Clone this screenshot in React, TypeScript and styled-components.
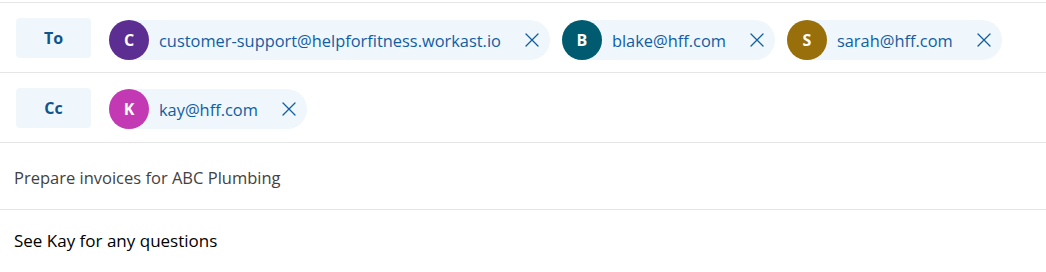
import React from "react";
import styled, { createGlobalStyle } from "styled-components";

const GlobalStyle = createGlobalStyle`
  html, body {
    margin: 0;
    padding: 0;
    background: #ffffff;
  }
  body {
    font-family: "Open Sans", "Noto Sans", "Liberation Sans", sans-serif;
    -webkit-font-smoothing: antialiased;
  }
`;

const Composer = styled.div`
  width: 1046px;
  padding-top: 2px;
`;

const RecipientRow = styled.div`
  display: flex;
  align-items: flex-start;
  gap: 18px;
  height: 69px;
  padding: 0 16px;
  border-top: 1px solid #e6e6e6;
  box-sizing: content-box;
`;

const FieldLabel = styled.button`
  flex: none;
  width: 75px;
  height: 40px;
  margin-top: 15px;
  border: none;
  border-radius: 4px;
  background: #eff6fc;
  color: #0f548c;
  font-family: inherit;
  font-size: 16px;
  font-weight: 700;
  cursor: pointer;
  padding: 0;
`;

const ChipList = styled.div<{ $offset: number }>`
  display: flex;
  flex-wrap: wrap;
  gap: 12px;
  margin-top: ${(p) => p.$offset}px;
`;

const Chip = styled.div`
  display: flex;
  align-items: center;
  height: 40px;
  padding-right: 8px;
  border-radius: 20px;
  background: #eff6fc;
`;

const Avatar = styled.span<{ $color: string }>`
  display: flex;
  align-items: center;
  justify-content: center;
  width: 40px;
  height: 40px;
  border-radius: 50%;
  background: ${(p) => p.$color};
  color: #ffffff;
  font-size: 16px;
  font-weight: 700;
  flex: none;
`;

const Address = styled.span`
  margin-left: 10px;
  color: #115ea3;
  font-size: 16.4px;
  white-space: nowrap;
`;

const RemoveButton = styled.button`
  display: flex;
  align-items: center;
  justify-content: center;
  width: 20px;
  height: 20px;
  margin-left: 21px;
  padding: 0;
  border: none;
  background: transparent;
  color: #115ea3;
  cursor: pointer;
`;

const SubjectRow = styled.div`
  padding: 24px 14px 20px;
  border-top: 1px solid #e6e6e6;
  border-bottom: 1px solid #e6e6e6;
  color: #424242;
  font-size: 16.5px;
  line-height: 22px;
`;

const Body = styled.div`
  padding: 20px 14px 0;
  color: #000000;
  font-size: 17px;
  line-height: 22px;
`;

const DismissIcon = () => (
  <svg width="14" height="14" viewBox="0 0 14 14" fill="none">
    <path
      d="M1 1L13 13M13 1L1 13"
      stroke="currentColor"
      strokeWidth="1.3"
      strokeLinecap="round"
    />
  </svg>
);

type Recipient = { initial: string; email: string; color: string };

const toRecipients: Recipient[] = [
  { initial: "C", email: "customer-support@helpforfitness.workast.io", color: "#5c2e91" },
  { initial: "B", email: "blake@hff.com", color: "#005b70" },
  { initial: "S", email: "sarah@hff.com", color: "#986f0b" },
];

const ccRecipients: Recipient[] = [
  { initial: "K", email: "kay@hff.com", color: "#c239b3" },
];

const RecipientChip = ({ r }: { r: Recipient }) => (
  <Chip>
    <Avatar $color={r.color}>{r.initial}</Avatar>
    <Address>{r.email}</Address>
    <RemoveButton aria-label={`Remove ${r.email}`}>
      <DismissIcon />
    </RemoveButton>
  </Chip>
);

export default function App() {
  return (
    <>
      <GlobalStyle />
      <Composer>
        <RecipientRow>
          <FieldLabel>To</FieldLabel>
          <ChipList $offset={17}>
            {toRecipients.map((r) => (
              <RecipientChip key={r.email} r={r} />
            ))}
          </ChipList>
        </RecipientRow>
        <RecipientRow>
          <FieldLabel>Cc</FieldLabel>
          <ChipList $offset={16}>
            {ccRecipients.map((r) => (
              <RecipientChip key={r.email} r={r} />
            ))}
          </ChipList>
        </RecipientRow>
        <SubjectRow>Prepare invoices for ABC Plumbing</SubjectRow>
        <Body>See Kay for any questions</Body>
      </Composer>
    </>
  );
}
